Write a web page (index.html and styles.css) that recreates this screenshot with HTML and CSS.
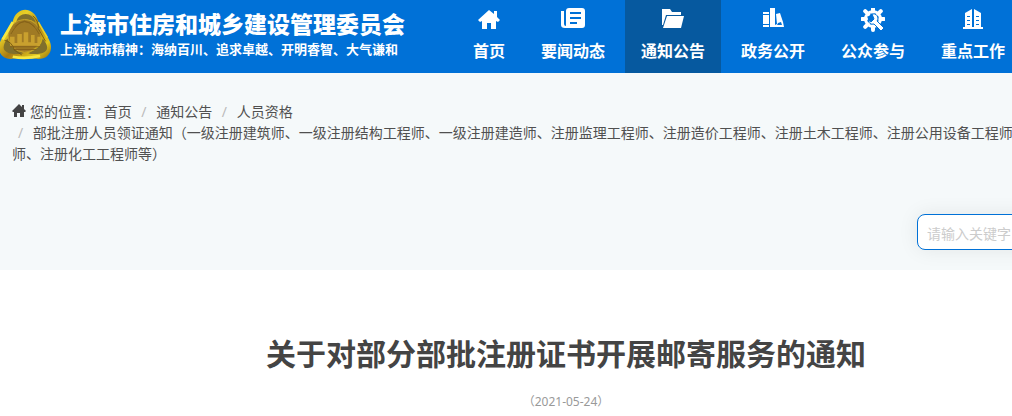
FILE: index.html
```html
<!DOCTYPE html>
<html lang="zh-CN">
<head>
    <meta charset="UTF-8">
    <title>关于对部分部批注册证书开展邮寄服务的通知</title>
    <link rel="stylesheet" href="styles.css">
</head>
<body>
<header class="header">
    <div class="container header-inner">
        <a class="brand" href="#">
            <svg class="emblem" viewBox="0 0 56 56" aria-hidden="true">
                <defs>
                    <linearGradient id="gold" x1="0" y1="0" x2="1" y2="1">
                        <stop offset="0" stop-color="#c9a50c"/>
                        <stop offset=".3" stop-color="#e8d028"/>
                        <stop offset=".55" stop-color="#a87a12"/>
                        <stop offset=".8" stop-color="#e2c81e"/>
                        <stop offset="1" stop-color="#8f6910"/>
                    </linearGradient>
                </defs>
                <path d="M14 14C18-3 37-3 42 14L52 31C62 46 52 58 38 55H16C2 58-6 46 2 33Z" fill="url(#gold)"/>
                <path d="M18 15C20 3 36 3 39 15Q30 9 18 15Z" fill="#80702c"/>
                <path d="M8 33Q-1 46 10 49Q20 51 26 49Q12 44 8 33Z" fill="#80702c"/>
                <path d="M47 33Q57 46 46 49Q36 51 31 49Q45 44 47 33Z" fill="#80702c"/>
                <circle cx="27" cy="30" r="18" fill="#a07a24" stroke="#c4a32a"/>
                <path d="M16 20Q27 9 38 20M12 28Q19 15 27 14Q36 15 43 28" fill="none" stroke="#856218"/>
                <path d="M11 41V31h5v7h3V28h5v9h2V26h5v11h3V29h4v9h3V31h3v10Z" fill="#c9a02e"/>
                <path d="M11 42h33M15 45h25" stroke="#85601a" stroke-width="1"/>
                <path d="M14 15L3 34M14 53Q28 56 44 52" fill="none" stroke="#f6e640" stroke-width="3"/>
                <path d="M42 15L52 32" fill="none" stroke="#e6cf2c" stroke-width="2"/>
                <path d="M36 8Q43 14 42 22L50 36M5 35Q13 36 16 46L24 51" fill="none" stroke="#765810"/>
            </svg>
            <span class="brand-text">
                <strong class="brand-name">上海市住房和城乡建设管理委员会</strong>
                <span class="brand-slogan">上海城市精神：海纳百川、追求卓越、开明睿智、大气谦和</span>
            </span>
        </a>
        <nav class="nav">
            <a class="nav-item" href="#">
                <svg class="nav-icon" viewBox="0 0 24 24"><path d="M12 2L1 12l2 2 2-1v8h5v-6h4v6h5v-8l2 1 2-2-3-3V3h-3v3Z"/></svg>
                首页
            </a>
            <a class="nav-item" href="#">
                <svg class="nav-icon" viewBox="0 0 24 24"><path d="M8 0h13q3 0 3 3v14q0 3-3 3H4q-4 0-4-3V3h3v13q0 2 2 2V3q0-3 3-3Zm1 4v2h11V4Zm0 5v2h11V9Zm0 5v2h7v-2Z"/></svg>
                要闻动态
            </a>
            <a class="nav-item active" href="#">
                <svg class="nav-icon" viewBox="0 0 24 24"><path d="M1 1h8l2 3h9v3H5L2 17H1Z"/><path d="M6 8h17l-3 12H2Z"/></svg>
                通知公告
            </a>
            <a class="nav-item" href="#">
                <svg class="nav-icon" viewBox="0 0 24 24"><path d="M2 4h6v2H2Zm0 3h6v9H2Zm0 10h6v2H2ZM9 0h5v19H9Zm6 6l4-1 3 9 1 5h-9v-2l2-1Zm2 9l-1 2h5l-1-3Z" fill-rule="evenodd"/></svg>
                政务公开
            </a>
            <a class="nav-item" href="#">
                <svg class="nav-icon" viewBox="0 0 24 24">
                    <circle cx="12" cy="11" r="7.5" fill="none" stroke="#fff" stroke-width="3"/>
                    <path d="M12 0v4M12 18v4M1 11h4M19 11h4M4.2 3.2l3 3M19.800 3.200l-3 3M4.200 18.800l3-3" fill="none" stroke="#fff" stroke-width="4" stroke-linecap="round"/>
                    <path d="M11 6q5-1 6 4 0 2-1 3l7 7-3 3-7-7q-5 1-6-4l3 2 3-3Z" stroke="#0071d7" stroke-width="1"/>
                </svg>
                公众参与
            </a>
            <a class="nav-item" href="#">
                <svg class="nav-icon" viewBox="0 0 24 24"><path d="M4 5l7-4v18h2V1l7 4v14h2v2H2v-2h2ZM6 8v1h3V8Zm0 4v1h3v-1Zm0 4v1h3v-1ZM15 8v1h3V8Zm0 4v1h3v-1Zm0 4v1h3v-1Z" fill-rule="evenodd"/></svg>
                重点工作
            </a>
        </nav>
    </div>
</header>
<div class="banner">
    <div class="container">
        <ol class="breadcrumb">
            <li><svg class="home" viewBox="0 0 14 14"><path d="M7 0L0 7l1 1h1v5h3V9h3v4h4V8h1l1-1-2-2V1h-2v2Z"/></svg>您的位置：</li>
            <li><a href="#">首页</a></li>
            <li class="crumb"><a href="#">通知公告</a></li>
            <li class="crumb"><a href="#">人员资格</a></li>
            <li class="crumb">部批注册人员领证通知（一级注册建筑师、一级注册结构工程师、一级注册建造师、注册监理工程师、注册造价工程师、注册土木工程师、注册公用设备工程师、注册电气工程师、注册化工工程师等）</li>
        </ol>
        <form class="search">
            <input type="text" class="search-input" placeholder="请输入关键字" aria-label="请输入关键字">
        </form>
    </div>
</div>
<main class="container article">
    <h1 class="article-title">关于对部分部批注册证书开展邮寄服务的通知</h1>
    <p class="article-date">（<time datetime="2021-05-24">2021-05-24</time>）</p>
</main>
</body>
</html>
```

FILE: styles.css
```css
*{
    margin: 0;
    padding: 0;
    box-sizing: border-box;
}
body{
    font-family: "Noto Sans", "Noto Sans CJK SC", sans-serif;
    font-size: 14px;
    line-height: 21px;
    color: #505050;
    background: #fff;
    overflow-x: hidden;
}
a{
    color: inherit;
    text-decoration: none;
}
/* 页面最小宽度，窗口较窄时右侧裁切 */
.container{
    min-width: 1132px;
    padding: 0 12px;
}
.header{
    background: #0071d7;
    color: #fff;
}
.header-inner{
    display: flex;
    padding: 0;
}
.brand{
    display: flex;
    align-items: center;
    gap: 9px;
    width: 457px;
    padding-bottom: 6px;
}
.emblem{
    width: 51px;
    height: 52px;
}
.brand-text{
    display: flex;
    flex-direction: column;
}
.brand-name{
    font-size: 23px;
    line-height: 30px;
    font-weight: 900;
}
.brand-slogan{
    font-size: 13px;
    line-height: 20px;
    font-weight: bold;
}
.nav{
    display: flex;
    gap: 4px;
}
.nav-item{
    display: flex;
    flex-direction: column;
    align-items: center;
    gap: 7px;
    padding: 8px 16px 10px;
    font-size: 16px;
    line-height: 24px;
    font-weight: bold;
}
.nav-item.active{
    background: #06599f;
}
.nav-icon{
    width: 24px;
    height: 24px;
    fill: #fff;
}
.banner{
    padding: 28px 0 20px;
    background: #f5f9fa;
}
.breadcrumb{
    list-style: none;
}
.breadcrumb li{
    display: inline-block;
    vertical-align: top;
}
.crumb::before{
    content: "/\00a0";
    padding: 0 6px;
    color: #bbb;
}
.home{
    width: 14px;
    height: 14px;
    margin-right: 4px;
    vertical-align: -1px;
    fill: #444;
}
.search{
    display: flex;
    justify-content: flex-end;
    margin-top: 50px;
}
.search-input{
    width: 203px;
    height: 36px;
    padding: 2px 9px 0;
    border: 1px solid #0071d7;
    border-radius: 8px;
    background: #fff;
    box-shadow: 0 0 20px rgba(0, 0, 0, .08);
    font: inherit;
    color: #444;
}
.search-input::placeholder{
    color: #ccc;
    opacity: 1;
}
.article{
    padding-top: 63px;
    text-align: center;
}
.article-title{
    font-size: 30px;
    line-height: 42px;
    color: #444;
}
.article-date{
    margin-top: 16px;
    font-size: 12px;
    color: #999;
}
```
